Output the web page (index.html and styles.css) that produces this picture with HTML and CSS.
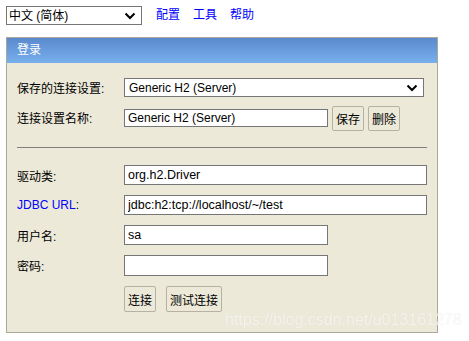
FILE: index.html
```html
<!DOCTYPE html>
<html>
<head>
    <link rel="stylesheet" href="styles.css">
</head>
<body>
    <div class="toolbar">
        <div class="select-wrap lang">
            <select class="select">
                <option>中文 (简体)</option>
            </select>
            <svg class="chevron" width="12" height="8" viewBox="0 0 12 8"><path d="M1.5 1.5 L6 6 L10.5 1.5" fill="none" stroke="#000" stroke-width="2"/></svg>
        </div>
        <a href="#" class="nav">配置</a>
        <a href="#" class="nav">工具</a>
        <a href="#" class="nav">帮助</a>
    </div>

    <div class="login">
        <div class="login-title">登录</div>
        <div class="login-body">
            <div class="row">
                <div class="label">保存的连接设置:</div>
                <div class="select-wrap wide">
                    <select class="select">
                        <option>Generic H2 (Server)</option>
                    </select>
                    <svg class="chevron" width="12" height="8" viewBox="0 0 12 8"><path d="M1.5 1.5 L6 6 L10.5 1.5" fill="none" stroke="#000" stroke-width="2"/></svg>
                </div>
            </div>
            <div class="row row-top">
                <div class="label label-top">连接设置名称:</div>
                <input class="input short" value="Generic H2 (Server)">
                <button class="btn">保存</button>
                <button class="btn">删除</button>
            </div>

            <hr class="sep">

            <div class="row">
                <div class="label">驱动类:</div>
                <input class="input long" value="org.h2.Driver">
            </div>
            <div class="row">
                <div class="label"><a href="#" class="link">JDBC URL</a>:</div>
                <input class="input long" value="jdbc:h2:tcp://localhost/~/test">
            </div>
            <div class="row">
                <div class="label">用户名:</div>
                <input class="input short" value="sa">
            </div>
            <div class="row">
                <div class="label">密码:</div>
                <input class="input short pass" type="password" value="">
            </div>
            <div class="row actions">
                <div class="label"></div>
                <button class="btn">连接</button>
                <button class="btn gap">测试连接</button>
            </div>
        </div>
    </div>

    <div class="watermark">https://blog.csdn.net/u013161278</div>
</body>
</html>
```

FILE: styles.css
```css
body {
    margin: 6px;
    font-family: "Liberation Sans", Arial, "Noto Sans CJK SC", sans-serif;
    font-size: 12px;
    color: #000;
    background: #fff;
}
.toolbar {
    display: flex;
    align-items: center;
    height: 19px;
}
.nav {
    color: #0000ff;
    text-decoration: none;
    margin-left: 13px;
    line-height: 19px;
}
.nav:first-of-type {
    margin-left: 14px;
}
.select-wrap {
    position: relative;
    height: 19px;
}
.select {
    -webkit-appearance: none;
    appearance: none;
    box-sizing: border-box;
    width: 100%;
    height: 19px;
    margin: 0;
    padding: 0 0 0 4px;
    border: 1px solid #767676;
    background: #fff;
    font: inherit;
    color: #000;
}
.chevron {
    position: absolute;
    right: 6px;
    top: 6px;
}
.lang {
    width: 136px;
}
.lang .select {
    padding-left: 2px;
}
.wide {
    width: 300px;
}
.login {
    margin-top: 12px;
    width: 432px;
    box-sizing: border-box;
    border: 1px solid #aca899;
    background-color: #ece9d8;
}
.login-title {
    height: 25px;
    line-height: 24px;
    padding-left: 10px;
    color: #fff;
    background: linear-gradient(#5a8acd, #78b0ee);
}
.login-body {
    padding: 15px 10px 20px 10px;
}
.row {
    display: flex;
    align-items: center;
    margin-bottom: 10px;
}
.row-top {
    align-items: flex-start;
    margin-top: -1px;
}
.label {
    width: 107px;
    flex-shrink: 0;
}
.label-top {
    padding-top: 3px;
}
.link {
    color: #0000ff;
    text-decoration: none;
}
.input {
    box-sizing: border-box;
    height: 20px;
    margin: 0;
    padding: 0 3px;
    border: 1px solid #767676;
    background: #fff;
    font: inherit;
    font-size: 12.5px;
    color: #000;
}
.row-top .input {
    margin-top: 3px;
    height: 18px;
    font-size: 12px;
}
.short {
    width: 204px;
}
.long {
    width: 303px;
}
.pass {
    height: 21px;
}
.btn {
    box-sizing: border-box;
    height: 25px;
    margin: 0 0 0 4px;
    padding: 0 3px;
    border: 1px solid #b5b1a3;
    border-radius: 2px;
    background: #ece9d8;
    font: inherit;
    color: #000;
}
.actions {
    margin-bottom: 0;
    margin-top: 10px;
}
.actions .btn {
    margin-left: 0;
    height: 26px;
}
.actions .gap {
    margin-left: 10px;
}
.sep {
    margin: 16px 0 17px 0;
    border: none;
    border-top: 1px solid #808080;
    height: 0;
}
.watermark {
    position: absolute;
    left: 225px;
    top: 311px;
    font-size: 16px;
    color: rgba(255, 255, 255, 0.7);
    text-shadow: 0 0 1px rgba(0, 0, 0, 0.08);
    white-space: nowrap;
}
```
